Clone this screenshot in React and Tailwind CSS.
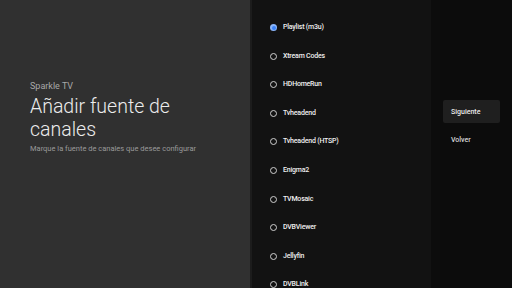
const SOURCES = [
  'Playlist (m3u)',
  'Xtream Codes',
  'HDHomeRun',
  'Tvheadend',
  'Tvheadend (HTSP)',
  'Enigma2',
  'TVMosaic',
  'DVBViewer',
  'Jellyfin',
  'DVBLink',
];

function Radio({ checked }) {
  return checked ? (
    <span className="flex h-[7px] w-[7px] items-center justify-center rounded-full bg-[#8ab4f8]">
      <span className="block h-[4px] w-[4px] rounded-full bg-[#3b82f6]" />
    </span>
  ) : (
    <span className="block h-[7px] w-[7px] rounded-full border border-[#cfcfcf]" />
  );
}

export default function App() {
  return (
    <div
      className="flex h-[288px] w-[512px] overflow-hidden bg-[#0c0c0c]"
      style={{ fontFamily: 'Roboto, "Liberation Sans", sans-serif' }}
    >
      <div className="flex w-[250px] shrink-0 flex-col bg-[#303030] pl-[30px] pt-[80px]">
        <div className="text-[9px] leading-[12px] text-[#a8a8a8]">Sparkle TV</div>
        <h1 className="mt-[3px] text-[19.5px] font-light leading-[23px] text-[#ececec]">
          Añadir fuente de
          <br />
          canales
        </h1>
        <p className="mt-[3px] text-[7.5px] leading-[10px] text-[#9a9a9a]">
          Marque la fuente de canales que desee configurar
        </p>
      </div>
      <div className="w-[2px] shrink-0 bg-[#1c1c1c]" />
      <div className="flex w-[179px] shrink-0 flex-col bg-[#121212] pl-[18px] pt-[22px]">
        {SOURCES.map((s, i) => (
          <div key={s} className="flex h-[28.6px] shrink-0 items-start gap-[6px]">
            <span className="mt-[2px] block">
              <Radio checked={i === 0} />
            </span>
            <span className="text-[7px] font-medium leading-[10px] tracking-[-0.2px] text-[#f0f0f0]">{s}</span>
          </div>
        ))}
      </div>
      <div className="flex flex-1 flex-col px-[12px] pt-[100px]">
        <div className="flex h-[23px] items-center rounded-[2px] bg-[#1f1f1f] pl-[8px] pt-[1px] text-[7px] font-medium text-[#ececec]">
          Siguiente
        </div>
        <div className="mt-[5px] flex h-[23px] items-center pl-[8px] pt-[1px] text-[7px] font-medium text-[#d8d8d8]">
          Volver
        </div>
      </div>
    </div>
  );
}
